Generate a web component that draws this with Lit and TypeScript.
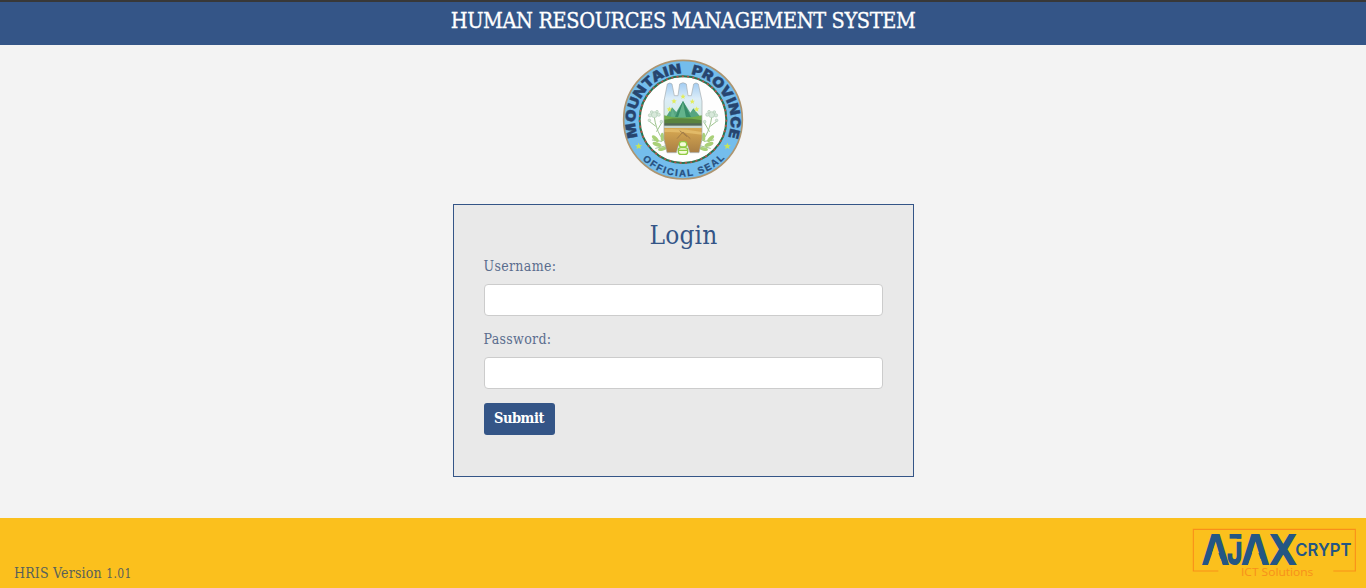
import { LitElement, html, svg, css } from "lit";
import { customElement } from "lit/decorators.js";

@customElement("province-seal")
class ProvinceSeal extends LitElement {
  static styles = css`
    :host { display: block; width: 136px; height: 136px; }
    svg { display: block; width: 100%; height: 100%; }
    .top { font: 900 41px Inter, "Liberation Sans", sans-serif; word-spacing: 16px; fill: #27456f; stroke: #27456f; stroke-width: 1; }
    .bottom { font: 700 29px "Liberation Sans", sans-serif; fill: #27507f; stroke: #27507f; stroke-width: 0.8; }
  `;
  private flower(flip: boolean) {
    return svg`<g transform=${flip ? "translate(408 0) scale(-1 1)" : ""}>
      <g fill="none" stroke="#9fc490" stroke-width="3" stroke-linecap="round">
        <path d="M118 196C124 238 140 272 182 294M121 222L103 208M125 238L139 214M140 268L112 264M154 281L122 289"/>
      </g>
      <g fill="#a9d078">
        <ellipse cx="121" cy="260" rx="13" ry="6" transform="rotate(45 121 260)"/>
        <ellipse cx="126" cy="277" rx="14" ry="6" transform="rotate(20 126 277)"/>
        <ellipse cx="142" cy="291" rx="13" ry="5" transform="rotate(-12 142 291)"/>
        <ellipse cx="142" cy="255" rx="5" ry="13"/>
      </g>
      <g fill="#d7e8da" stroke="#a5c4aa" stroke-width="1.5">
        <circle cx="118" cy="188" r="9"/><circle cx="105" cy="190" r="5"/><circle cx="131" cy="188" r="5"/>
        <circle cx="110" cy="180" r="4"/><circle cx="126" cy="179" r="4"/><circle cx="103" cy="205" r="4"/><circle cx="139" cy="209" r="4"/>
      </g>
    </g>`;
  }
  private star(x: number, y: number, s: number, color: string) {
    return svg`<path fill=${color} transform="translate(${x} ${y}) scale(${s})"
      d="M0-10L2.6-3.4L9.5-3.1L4.1 1.3L5.9 8.1L0 4.2L-5.9 8.1L-4.1 1.3L-9.5-3.1L-2.6-3.4Z"/>`;
  }
  render() {
    return html`<svg viewBox="0 0 408 408" aria-label="Mountain Province official seal">
      <defs>
        <linearGradient id="sky" x1="0" y1="0" x2="0" y2="1">
          <stop offset="0" stop-color="#9dc9f2"/><stop offset=".4" stop-color="#dcedf8"/><stop offset="1" stop-color="#d3ecd9"/>
        </linearGradient>
        <linearGradient id="soil" x1="0" y1="0" x2="0" y2="1">
          <stop offset="0" stop-color="#d9aa52"/><stop offset="1" stop-color="#a57b43"/>
        </linearGradient>
        <clipPath id="shield"><path d="M157 96Q165 90 171 96L178 131H189L194 96Q204 88 214 96L219 131H229L236 96Q243 90 250 96L261 147V262L252 302H225L218 281Q204 261 190 281L184 302H156L147 262V147Z"/></clipPath>
        <path id="arcTop" d="M69 255A143 143 0 1 1 339 255"/>
        <path id="arcBottom" d="M82 322A170 170 0 0 0 332 315"/>
      </defs>
      <circle cx="204" cy="203" r="178" fill="#74bdec" stroke="#ad9570" stroke-width="5"/>
      <circle cx="204" cy="203" r="130" fill="#fefefe" stroke="#28754f" stroke-width="6"/>
      <circle cx="204" cy="203" r="130" fill="none" stroke="#bd5149" stroke-width="5" stroke-dasharray="6 10"/>
      <text class="top"><textPath href="#arcTop" textLength="546" lengthAdjust="spacingAndGlyphs">MOUNTAIN PROVINCE</textPath></text>
      <text class="bottom"><textPath href="#arcBottom" textLength="276" lengthAdjust="spacing">OFFICIAL SEAL</textPath></text>
      ${this.star(71, 283, 1.1, "#c6e45c")}${this.star(337, 283, 1.1, "#c6e45c")}
      ${this.flower(false)}${this.flower(true)}
      <g clip-path="url(#shield)">
        <rect x="140" y="88" width="130" height="130" fill="url(#sky)"/>
        <path d="M147 205L171 166L184 180L204 147L226 182L235 169L261 200V216H147Z" fill="#55a582"/>
        <path d="M180 195L204 147L228 195Z" fill="#368b68"/>
        <path d="M204 150L213 196H189ZM171 168L181 194H168Z" fill="#63b38b"/>
        <path d="M147 190Q200 205 261 190V212H147Z" fill="#72ae4c"/>
        <path d="M147 203Q204 194 261 205V222H147Z" fill="#5a843f"/>
        <rect x="147" y="214" width="114" height="10" fill="#536956"/>
        <rect x="147" y="221" width="114" height="8" fill="#c9d7cd"/>
        <rect x="147" y="228" width="114" height="80" fill="url(#soil)"/>
        <path d="M147 232Q205 229 261 240V248Q200 238 147 240Z" fill="#e2ba68"/>
        <path d="M186 260L204 240L226 260M194 236L216 254" fill="none" stroke="#9a7646" stroke-width="2.5"/>
      </g>
      <path d="M157 96Q165 90 171 96L178 131H189L194 96Q204 88 214 96L219 131H229L236 96Q243 90 250 96L261 147V262L252 302H225L218 281Q204 261 190 281L184 302H156L147 262V147Z" fill="none" stroke="#a3aaad" stroke-width="2"/>
      ${[[204, 134], [177, 148], [232, 149], [163, 172], [245, 172]].map(([x, y]) => this.star(x, y, 0.85, "#e2ed5a"))}
      <g fill="#f5fbd9" stroke="#8fca43" stroke-width="4">
        <rect x="193" y="269" width="22" height="16" rx="7"/>
        <rect x="190" y="287" width="28" height="20" rx="8"/>
        <path d="M191 295H217" fill="none"/>
      </g>
    </svg>`;
  }
}

@customElement("ajax-logo")
class AjaxLogo extends LitElement {
  static styles = css`
    :host { display: block; width: 176px; height: 70px; }
    svg { display: block; width: 100%; height: 100%; }
    .frame { fill: none; stroke: #f98f1a; stroke-width: 3.4; }
    .name { font: 700 126px "DejaVu Sans", sans-serif; fill: #245684; }
    .jay { font-family: Inter, "Liberation Sans", sans-serif; font-weight: 800; }
    .crypt { font: 600 52px Inter, "Liberation Sans", sans-serif; fill: #245684; }
    .tag { font: 400 33px "Open Sans", sans-serif; fill: #f78f1c; }
    .gap { fill: #fbc01d; }
  `;
  render() {
    return html`<svg viewBox="30 9 528 210" aria-label="AjaxCrypt ICT Solutions">
      <path class="frame" d="M115 168H40V43H526V168H460"/>
      <text class="name" x="65" y="149" textLength="82" lengthAdjust="spacingAndGlyphs">A</text>
      <text class="name jay" x="140" y="149" textLength="48" lengthAdjust="spacingAndGlyphs">J</text>
      <text class="name" x="184" y="149" textLength="84" lengthAdjust="spacingAndGlyphs">A</text>
      <text class="name" x="266" y="149" textLength="86" lengthAdjust="spacingAndGlyphs">X</text>
      <path class="gap" d="M106 88L128 150H84ZM226 88L248 150H204ZM145 71H186V80H145Z"/>
      <rect x="149" y="57" width="34" height="14" fill="#245684"/>
      <text class="crypt" x="346" y="123" textLength="168" lengthAdjust="spacingAndGlyphs">CRYPT</text>
      <text class="tag" x="183" y="182" textLength="217" lengthAdjust="spacingAndGlyphs">ICT Solutions</text>
    </svg>`;
  }
}

@customElement("app-root")
class AppRoot extends LitElement {
  static styles = css`
    :host {
      display: flex; flex-direction: column; height: 588px; background: #f3f3f3; color: #345587;
      font-family: "DejaVu Serif Condensed", "DejaVu Serif", serif; font-stretch: condensed; font-size: 14px;
    }
    * { box-sizing: border-box; }
    header {
      height: 45px; flex: none; border-top: 2px solid #383838; background: #345587; color: #fff;
      text-align: center; font-size: 21.5px; line-height: 38px;
    }
    .title { letter-spacing: -0.38px; -webkit-text-stroke: 0.3px #fff; }
    main { flex: 1; display: flex; flex-direction: column; align-items: center; padding-top: 7px; }
    .card {
      width: 461px; height: 273px; margin-top: 16px; padding: 14px 30px 0; border: 1px solid #345587;
      background: #e9e9e9; display: flex; flex-direction: column; align-items: flex-start;
    }
    h1 { margin: 0; align-self: center; font-size: 26px; font-weight: 400; line-height: 32px; letter-spacing: 0.2px; padding-left: 1px; }
    label { font-size: 14px; line-height: 20px; height: 20px; color: #5a6d8e; letter-spacing: 0.33px; }
    .user { margin-top: 5px; }
    .pass { margin-top: 13px; }
    input {
      width: 399px; height: 32px; margin: 8px 0 0; border: 1px solid #ccc; border-radius: 4px;
      background: #fff; padding: 0 10px;
    }
    button {
      width: 71px; height: 32px; margin-top: 14px; padding: 0 0 3px; border: 0; border-radius: 3px; background: #345587;
      color: #fff; font: inherit; font-size: 14.5px; font-weight: 700; letter-spacing: -0.45px;
    }
    footer {
      flex: none; height: 70px; background: #fbc01d; display: flex; justify-content: space-between;
      align-items: flex-end; padding-left: 14px;
    }
    .version { color: #58605a; line-height: 20px; padding-bottom: 4px; letter-spacing: 0.2px; }
    .num { font-size: 12px; letter-spacing: 0.4px; }
  `;
  render() {
    return html`
      <header><span class="title">HUMAN RESOURCES MANAGEMENT SYSTEM</span></header>
      <main>
        <province-seal></province-seal>
        <form class="card" @submit=${(e: Event) => e.preventDefault()}>
          <h1>Login</h1>
          <label class="user" for="u">Username:</label>
          <input id="u" type="text" />
          <label class="pass" for="p">Password:</label>
          <input id="p" type="password" />
          <button>Submit</button>
        </form>
      </main>
      <footer><span class="version">HRIS Version <span class="num">1.01</span></span><ajax-logo></ajax-logo></footer>
    `;
  }
}
